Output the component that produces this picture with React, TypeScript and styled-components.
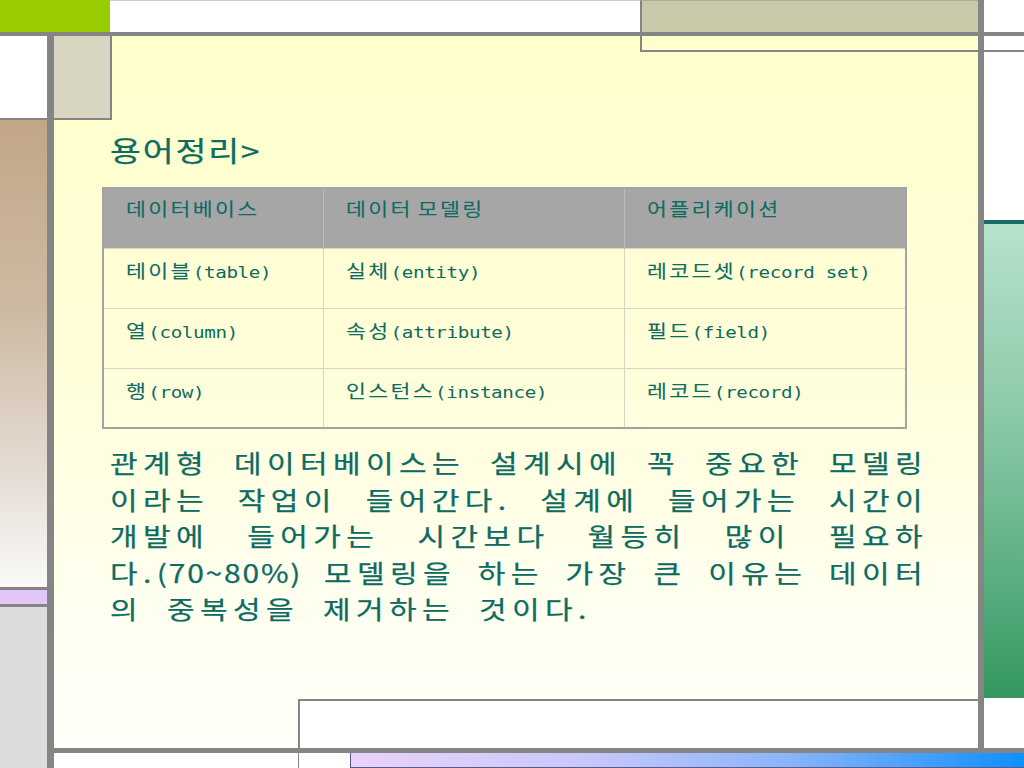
import React from "react";
import styled, { createGlobalStyle } from "styled-components";

const GRAY = "#858585";
const TEAL = "#0d6b62";
const STRETCH = 1.2;

const Global = createGlobalStyle`
  *, *::before, *::after { box-sizing: border-box; }
  html, body { margin: 0; padding: 0; background: #fff; }
  body { width: 1024px; height: 768px; overflow: hidden; font-family: "Noto Sans CJK KR", sans-serif; }
`;

const Slide = styled.div`
  width: 1024px;
  height: 768px;
  display: grid;
  grid-template-columns: 47px 7px 924px 6px 40px;
  grid-template-rows: 32px 4px 712px 5px 15px;
  background: #fff;
  overflow: hidden;
`;

const TopBand = styled.header`
  grid-column: 1 / 4;
  grid-row: 1;
  display: flex;
`;
const GreenBlock = styled.div`
  width: 110px;
  background: #99cc00;
`;
const TopGap = styled.div`
  flex: 1;
  border-top: 1px solid #cfcfcf;
  background: #fff;
`;
const KhakiTab = styled.div`
  width: 338px;
  background: #c9c8a9;
  border-left: 2px solid ${GRAY};
  border-top: 1px solid #9fb0a0;
`;

const HBar = styled.div<{ $row: number; $from: number }>`
  grid-column: ${(p) => p.$from} / -1;
  grid-row: ${(p) => p.$row};
  background: ${GRAY};
`;
const VBar = styled.div<{ $col: number; $rows: string }>`
  grid-column: ${(p) => p.$col};
  grid-row: ${(p) => p.$rows};
  background: ${GRAY};
`;

const Rail = styled.aside<{ $col: number; $rows: string }>`
  grid-column: ${(p) => p.$col};
  grid-row: ${(p) => p.$rows};
  display: flex;
  flex-direction: column;
`;
const RailBlock = styled.div<{ $h?: number; $bg: string }>`
  flex: ${(p) => (p.$h !== undefined ? `0 0 ${p.$h}px` : "1 1 auto")};
  background: ${(p) => p.$bg};
`;

const Content = styled.section`
  grid-column: 3;
  grid-row: 3;
  display: flex;
  flex-direction: column;
  background: linear-gradient(180deg, #ffffcc 0%, #fffed8 45%, #fffff0 80%, #fffffa 100%);
`;
const TopRow = styled.div`
  flex: 0 0 84px;
  display: flex;
  align-items: flex-start;
`;
const KhakiBlock = styled.div`
  width: 58px;
  height: 84px;
  background: #d8d6c0;
  border-right: 2px solid ${GRAY};
  border-bottom: 2px solid ${GRAY};
`;
const OutlineTab = styled.div`
  margin-left: auto;
  width: 338px;
  height: 16px;
  border-left: 2px solid ${GRAY};
  border-bottom: 2px solid ${GRAY};
`;

const Body = styled.main`
  padding-left: 48px;
  display: flex;
  flex-direction: column;
  align-items: flex-start;
  color: ${TEAL};
  font-weight: 400;
`;

/* the slide's text is drawn slightly wider than tall */
const Stretch = styled.span`
  display: inline-block;
  white-space: nowrap;
  transform: scaleX(${STRETCH});
  transform-origin: 0 50%;
`;

const Title = styled.h1`
  margin: 12px 0 0 8px;
  font-size: 28px;
  line-height: 36px;
  font-weight: 400;
  letter-spacing: 1.5px;
  -webkit-text-stroke: 0.25px ${TEAL};
`;

const Table = styled.table`
  margin-top: 19px;
  width: 803px;
  border-collapse: collapse;
  table-layout: fixed;
  border: 2px solid #a3a3a3;
`;
const Th = styled.th`
  height: 60px;
  background: #a6a6a6;
  text-align: left;
  vertical-align: top;
  padding: 7px 0 0 22px;
  font-weight: 400;
  border-right: 1px solid #bcbcbc;
`;
const Td = styled.td`
  height: 60px;
  text-align: left;
  vertical-align: top;
  padding: 9px 0 0 22px;
  border: 1px solid #d6d6c6;
`;
const Ko = styled.span`
  font-family: "Noto Sans CJK KR", sans-serif;
  font-size: 18px;
  line-height: 24px;
  letter-spacing: 2px;
  word-spacing: -2px;
  -webkit-text-stroke: 0.1px ${TEAL};
`;
const En = styled.span`
  font-family: "DejaVu Sans Mono", monospace;
  font-size: 16px;
  line-height: 24px;
  letter-spacing: -0.3px;
`;

const Paragraph = styled.div`
  margin: 15px 0 0 8px;
  width: ${818 / STRETCH}px;
  font-size: 25px;
  line-height: 36.5px;
  letter-spacing: 4.5px;
  -webkit-text-stroke: 0.25px ${TEAL};
  transform: scaleX(${STRETCH});
  transform-origin: 0 0;
`;
const Line = styled.div<{ $last?: boolean }>`
  display: flex;
  justify-content: ${(p) => (p.$last ? "flex-start" : "space-between")};
  gap: ${(p) => (p.$last ? "20px" : "0")};
  white-space: nowrap;
`;
const Num = styled.span`
  letter-spacing: 1.5px;
`;

const BottomRect = styled.div`
  margin-top: auto;
  margin-left: 244px;
  height: 49px;
  background: #fff;
  border-left: 2px solid ${GRAY};
  border-top: 2px solid ${GRAY};
`;

const BottomBand = styled.footer`
  grid-column: 3 / -1;
  grid-row: 5;
  display: flex;
`;
const BandGap = styled.div<{ $w: number; $line?: boolean }>`
  flex: 0 0 ${(p) => p.$w}px;
  background: #fff;
  border-left: ${(p) => (p.$line ? `1px solid ${GRAY}` : "none")};
`;
const BandGradient = styled.div`
  flex: 1;
  background: linear-gradient(90deg, #ead2fb 0%, #c8c8fa 35%, #8ab4fb 65%, #0f8fff 100%);
  border-left: 1px solid #5a5a8a;
  border-bottom: 1px solid #5a5a8a;
`;

type Cell = [string, string];
const header: string[] = ["데이터베이스", "데이터 모델링", "어플리케이션"];
const rows: Cell[][] = [
  [["테이블", "(table)"], ["실체", "(entity)"], ["레코드셋", "(record set)"]],
  [["열", "(column)"], ["속성", "(attribute)"], ["필드", "(field)"]],
  [["행", "(row)"], ["인스턴스", "(instance)"], ["레코드", "(record)"]],
];

const lines: React.ReactNode[][] = [
  ["관계형", "데이터베이스는", "설계시에", "꼭", "중요한", "모델링"],
  ["이라는", "작업이", "들어간다.", "설계에", "들어가는", "시간이"],
  ["개발에", "들어가는", "시간보다", "월등히", "많이", "필요하"],
  [
    <>
      다.<Num>(70~80%)</Num>
    </>,
    "모델링을",
    "하는",
    "가장",
    "큰",
    "이유는",
    "데이터",
  ],
  ["의", "중복성을", "제거하는", "것이다."],
];

export default function App() {
  return (
    <>
      <Global />
      <Slide>
        <TopBand>
          <GreenBlock />
          <TopGap />
          <KhakiTab />
        </TopBand>
        <HBar $row={2} $from={1} />
        <VBar $col={4} $rows="1 / 5" />

        <Rail $col={1} $rows="3 / 6">
          <RailBlock $h={82} $bg="#fff" />
          <RailBlock $h={2} $bg={GRAY} />
          <RailBlock
            $h={467}
            $bg="linear-gradient(180deg, #c2a787 0%, #cdb9a2 40%, #e4dcd3 75%, #fbfaf8 100%)"
          />
          <RailBlock $h={3} $bg={GRAY} />
          <RailBlock $h={14} $bg="#e2c6f5" />
          <RailBlock $h={3} $bg={GRAY} />
          <RailBlock $bg="#dcdcdc" />
        </Rail>
        <VBar $col={2} $rows="3 / 6" />

        <Content>
          <TopRow>
            <KhakiBlock />
            <OutlineTab />
          </TopRow>
          <Body>
            <Title>
              <Stretch>용어정리&gt;</Stretch>
            </Title>
            <Table>
              <colgroup>
                <col style={{ width: 220 }} />
                <col style={{ width: 301 }} />
                <col style={{ width: 282 }} />
              </colgroup>
              <thead>
                <tr>
                  {header.map((h) => (
                    <Th key={h}>
                      <Stretch>
                        <Ko>{h}</Ko>
                      </Stretch>
                    </Th>
                  ))}
                </tr>
              </thead>
              <tbody>
                {rows.map((r, i) => (
                  <tr key={i}>
                    {r.map(([ko, en]) => (
                      <Td key={ko}>
                        <Stretch>
                          <Ko>{ko}</Ko>
                          <En>{en}</En>
                        </Stretch>
                      </Td>
                    ))}
                  </tr>
                ))}
              </tbody>
            </Table>
            <Paragraph>
              {lines.map((words, i) => (
                <Line key={i} $last={i === lines.length - 1}>
                  {words.map((w, j) => (
                    <span key={j}>{w}</span>
                  ))}
                </Line>
              ))}
            </Paragraph>
          </Body>
          <BottomRect />
        </Content>

        <Rail $col={5} $rows="3">
          <RailBlock $h={14} $bg="#fff" />
          <RailBlock $h={2} $bg={GRAY} />
          <RailBlock $h={168} $bg="#fff" />
          <RailBlock $h={4} $bg="#1b6a6a" />
          <RailBlock
            $h={474}
            $bg="linear-gradient(180deg, #b6e3cc 0%, #8ccaa8 40%, #5aae80 75%, #33975f 100%)"
          />
          <RailBlock $bg="#fff" />
        </Rail>

        <HBar $row={4} $from={3} />
        <BottomBand>
          <BandGap $w={244} />
          <BandGap $w={52} $line />
          <BandGradient />
        </BottomBand>
      </Slide>
    </>
  );
}
